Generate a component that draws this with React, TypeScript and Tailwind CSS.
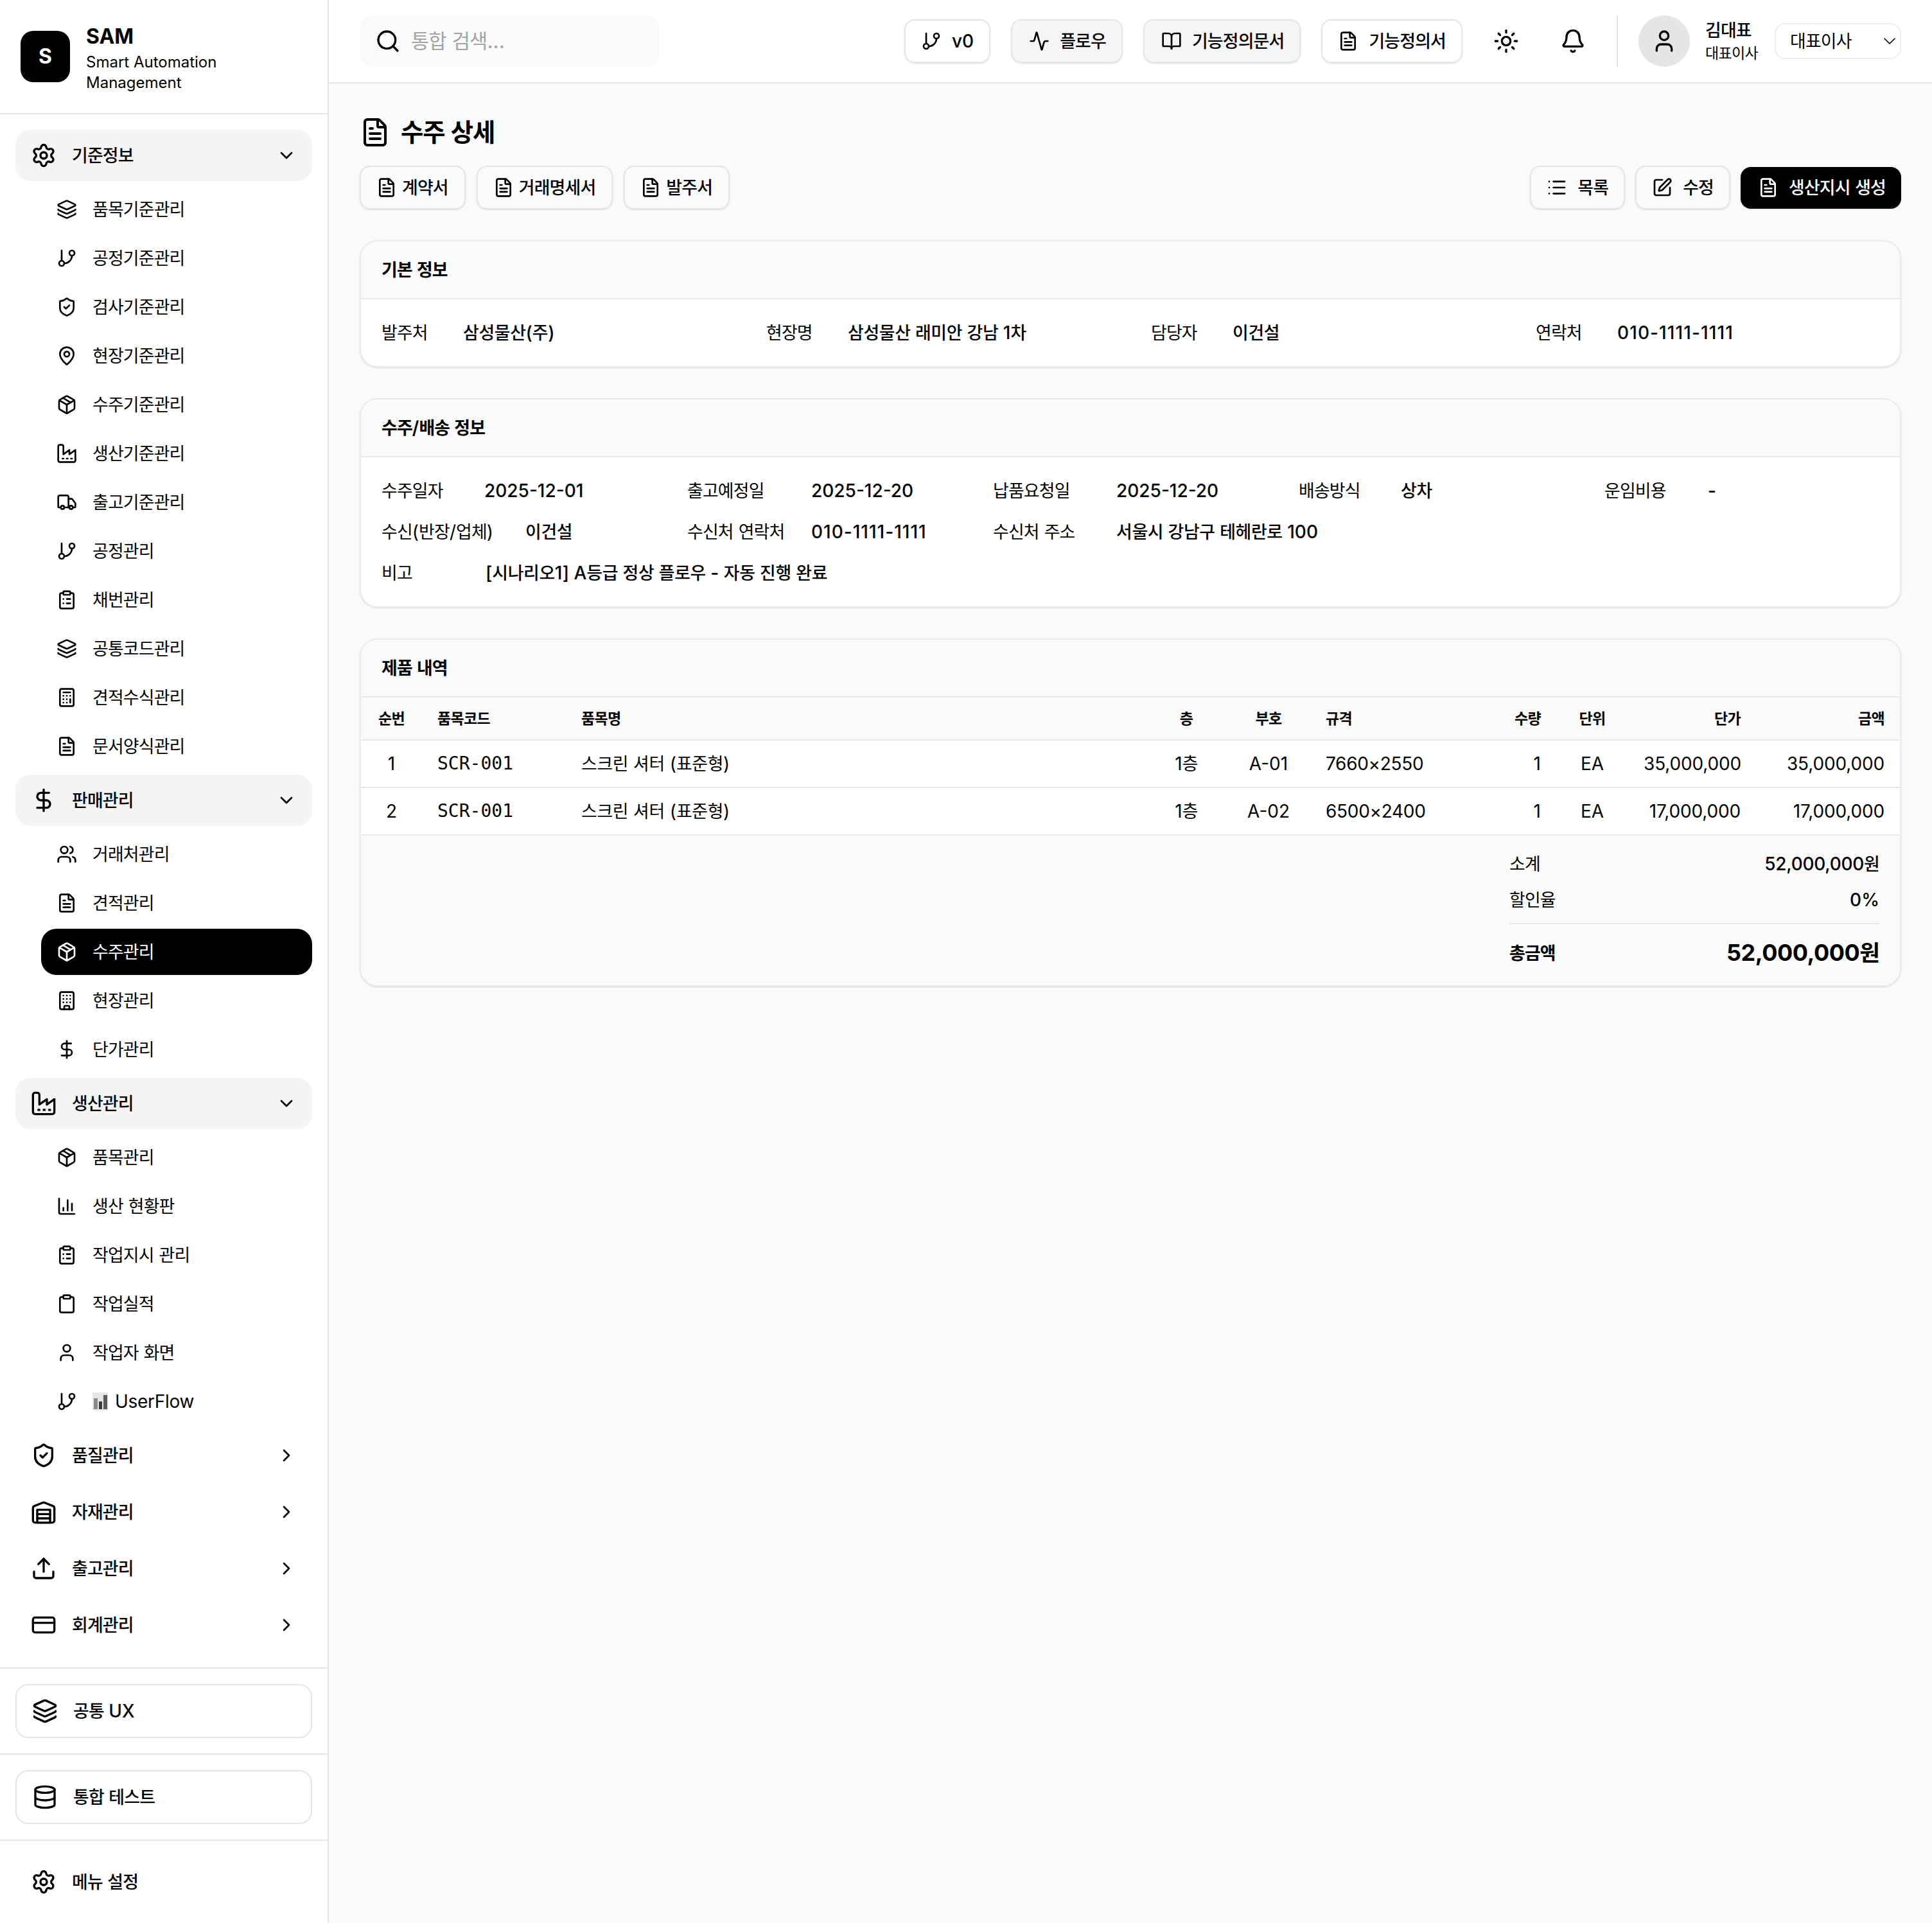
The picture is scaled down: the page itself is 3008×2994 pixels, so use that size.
import type { ComponentType, ReactNode } from "react";
import {
  Activity,
  Bell,
  BookOpen,
  Building,
  Calculator,
  ChartColumn,
  ChevronDown,
  ChevronRight,
  Clipboard,
  ClipboardList,
  CreditCard,
  Database,
  DollarSign,
  FileText,
  GitBranch,
  Layers,
  List,
  MapPin,
  Package,
  Search,
  Settings,
  ShieldCheck,
  SquarePen,
  Sun,
  Truck,
  Upload,
  User,
  Users,
} from "lucide-react";

type Icon = ComponentType<{ size?: number; className?: string }>;

// the reference uses the older zigzag factory, lucide's current one is rounded
const Factory: Icon = ({ size = 24, className }) => (
  <svg width={size} height={size} viewBox="0 0 24 24" fill="none" stroke="currentColor" strokeWidth="2" strokeLinecap="round" strokeLinejoin="round" className={className}>
    <path d="M2 20a2 2 0 0 0 2 2h16a2 2 0 0 0 2-2V8l-7 5V8l-7 5V4a2 2 0 0 0-2-2H4a2 2 0 0 0-2 2Z" />
    <path d="M17 18h1" />
    <path d="M12 18h1" />
    <path d="M7 18h1" />
  </svg>
);

const Warehouse: Icon = ({ size = 24, className }) => (
  <svg width={size} height={size} viewBox="0 0 24 24" fill="none" stroke="currentColor" strokeWidth="2" strokeLinecap="round" strokeLinejoin="round" className={className}>
    <path d="M22 8.35V20a2 2 0 0 1-2 2H4a2 2 0 0 1-2-2V8.35A2 2 0 0 1 3.26 6.5l8-3.2a2 2 0 0 1 1.48 0l8 3.2A2 2 0 0 1 22 8.35Z" />
    <path d="M6 18h12" />
    <path d="M6 14h12" />
    <rect x="6" y="10" width="12" height="12" />
  </svg>
);

// hangul fallback runs wider than the reference font, so squeeze those runs only
function Ko({ children, wide }: { children: string; wide?: boolean }) {
  const parts = children.split(/([\uAC00-\uD7A3]+)/);
  return (
    <span>
      {parts.map((part, i) =>
        i % 2 === 1 ? (
          <span key={i} className={`text-[0.96em] ${wide ? "tracking-[-0.013em]" : "tracking-[-0.03em]"}`}>
            {part}
          </span>
        ) : (
          part
        ),
      )}
    </span>
  );
}

const baseItems: [Icon, string][] = [
  [Layers, "품목기준관리"],
  [GitBranch, "공정기준관리"],
  [ShieldCheck, "검사기준관리"],
  [MapPin, "현장기준관리"],
  [Package, "수주기준관리"],
  [Factory, "생산기준관리"],
  [Truck, "출고기준관리"],
  [GitBranch, "공정관리"],
  [ClipboardList, "채번관리"],
  [Layers, "공통코드관리"],
  [Calculator, "견적수식관리"],
  [FileText, "문서양식관리"],
];

const salesItems: [Icon, string][] = [
  [Users, "거래처관리"],
  [FileText, "견적관리"],
  [Package, "수주관리"],
  [Building, "현장관리"],
  [DollarSign, "단가관리"],
];

const productionItems: [Icon, string][] = [
  [Package, "품목관리"],
  [ChartColumn, "생산 현황판"],
  [ClipboardList, "작업지시 관리"],
  [Clipboard, "작업실적"],
  [User, "작업자 화면"],
];

function GroupHead({ icon: I, label, open }: { icon: Icon; label: string; open?: boolean }) {
  return (
    <div
      className={`flex h-[80px] items-center gap-[24px] rounded-[24px] px-[24px] ${open ? "bg-[#f4f4f5]" : ""}`}
    >
      <I size={40} className="shrink-0" />
      <span className="flex-1 text-[28px] font-medium">
        <Ko>{label}</Ko>
      </span>
      {open ? <ChevronDown size={32} /> : <ChevronRight size={32} />}
    </div>
  );
}

function SubItem({ icon: I, label, active }: { icon: Icon; label: ReactNode; active?: boolean }) {
  return (
    <div
      className={`ml-[40px] flex h-[72px] items-center gap-[24px] rounded-[24px] px-[24px] text-[28px] ${active ? "bg-black text-white" : ""}`}
    >
      <I size={32} className="shrink-0" />
      <span className="flex items-center">{label}</span>
    </div>
  );
}

function SubList({ items, active, children }: { items: [Icon, string][]; active?: string; children?: ReactNode }) {
  return (
    <div className="mt-[8px] flex flex-col gap-[4px]">
      {items.map(([icon, label]) => (
        <SubItem key={label} icon={icon} label={<Ko>{label}</Ko>} active={label === active} />
      ))}
      {children}
    </div>
  );
}

function Sidebar() {
  return (
    <aside className="flex w-[512px] shrink-0 flex-col border-r-2 border-[#e5e5e5] bg-white">
      {/* Logo */}
      <div className="flex h-[178px] shrink-0 items-start gap-[25px] border-b-2 border-[#e5e5e5] px-[32px] pt-[37px]">
        <div className="mt-[11px] flex h-[80px] w-[77px] items-center justify-center rounded-[20px] bg-black text-[32px] font-bold text-white">
          S
        </div>
        <div>
          <div className="mb-[4px] text-[32px] leading-[40px] font-bold">SAM</div>
          <div className="w-[240px] text-[24px] leading-[32px]">Smart Automation Management</div>
        </div>
      </div>

      {/* Menu */}
      <nav className="flex flex-1 flex-col gap-[8px] px-[24px] pt-[24px]">
        <div>
          <GroupHead icon={Settings} label="기준정보" open />
          <SubList items={baseItems} />
        </div>
        <div>
          <GroupHead icon={DollarSign} label="판매관리" open />
          <SubList items={salesItems} active="수주관리" />
        </div>
        <div>
          <GroupHead icon={Factory} label="생산관리" open />
          <SubList items={productionItems}>
            <SubItem
              icon={GitBranch}
              label={
                <>
                  <svg width="24" height="28" viewBox="0 0 24 28" className="mr-[11px]">
                    <rect width="24" height="28" fill="#e6e6e6" />
                    <rect x="2" y="9" width="6" height="17" fill="#8a8a8a" />
                    <rect x="10" y="14" width="5" height="12" fill="#3a3a3a" />
                    <rect x="17" y="4" width="6" height="22" fill="#5c5c5c" />
                  </svg>
                  <span className="tracking-[-0.3px]">UserFlow</span>
                </>
              }
            />
          </SubList>
        </div>
        <GroupHead icon={ShieldCheck} label="품질관리" />
        <GroupHead icon={Warehouse} label="자재관리" />
        <GroupHead icon={Upload} label="출고관리" />
        <GroupHead icon={CreditCard} label="회계관리" />
      </nav>

      {/* Footer */}
      <div className="border-t-2 border-[#e5e5e5] p-[24px]">
        <div className="flex h-[84px] items-center gap-[24px] rounded-[20px] border-2 border-[#e5e5e5] px-[24px] text-[28px] font-medium">
          <Layers size={40} />
          <span>
            <Ko>공통</Ko> UX
          </span>
        </div>
      </div>
      <div className="border-t-2 border-[#e5e5e5] p-[24px]">
        <div className="flex h-[84px] items-center gap-[24px] rounded-[20px] border-2 border-[#e5e5e5] px-[24px] text-[28px] font-medium">
          <Database size={40} />
          <Ko>통합 테스트</Ko>
        </div>
      </div>
      <div className="border-t-2 border-[#e5e5e5] p-[24px]">
        <div className="flex h-[80px] items-center gap-[24px] px-[24px] text-[28px] font-medium">
          <Settings size={40} />
          <Ko>메뉴 설정</Ko>
        </div>
      </div>
    </aside>
  );
}

function OutlineButton({
  icon: I,
  label,
  gap = "gap-[16px]",
  className = "",
}: {
  icon: Icon;
  label: string;
  gap?: string;
  className?: string;
}) {
  return (
    <button
      className={`flex h-[68px] items-center rounded-[16px] border-2 border-[#e5e5e5] text-[28px] font-medium shadow-sm ${gap} ${className}`}
    >
      <I size={32} />
      <Ko>{label}</Ko>
    </button>
  );
}

function Topbar() {
  return (
    <header className="flex h-[130px] shrink-0 items-center justify-between border-b-2 border-[#e5e5e5] bg-white px-[48px]">
      <div className="flex h-[80px] w-[466px] items-center gap-[16px] rounded-[20px] bg-[#fafafa] px-[24px]">
        <Search size={40} />
        <span className="text-[32px] text-[#a3a3a3]">
          <Ko>통합 검색...</Ko>
        </span>
      </div>
      <div className="flex items-center">
        <div className="flex items-center gap-[32px]">
          <OutlineButton icon={GitBranch} label="v0" className="px-[24px]" />
          <OutlineButton icon={Activity} label="플로우" className="bg-[#f5f5f5] pr-[24px] pl-[26px]" />
          <OutlineButton icon={BookOpen} label="기능정의문서" className="bg-[#f5f5f5] pr-[24px] pl-[26px]" />
          <OutlineButton icon={FileText} label="기능정의서" className="px-[24px]" />
        </div>
        <div className="ml-[32px] flex h-[72px] w-[72px] items-center justify-center">
          <Sun size={40} />
        </div>
        <div className="ml-[32px] flex h-[72px] w-[72px] items-center justify-center">
          <Bell size={40} />
        </div>
        <div className="mx-[32px] h-[80px] w-[2px] bg-[#e5e5e5]" />
        <div className="flex h-[80px] w-[80px] items-center justify-center rounded-full bg-[#e5e5e5]">
          <User size={40} />
        </div>
        <div className="ml-[24px] w-[84px]">
          <div className="text-[28px] leading-[36px] font-medium">
            <Ko>김대표</Ko>
          </div>
          <div className="mt-[2px] text-[24px] leading-[32px]">
            <Ko>대표이사</Ko>
          </div>
        </div>
        <div className="ml-[24px] flex h-[56px] w-[197px] items-center justify-between rounded-[16px] border-2 border-[#efefef] pl-[22px] text-[28px]">
          <Ko>대표이사</Ko>
          <ChevronDown size={32} strokeWidth={1.2} />
        </div>
      </div>
    </header>
  );
}

function Card({ title, children }: { title: string; children: ReactNode }) {
  return (
    <section className="mb-[48px] overflow-hidden rounded-[28px] border-2 border-[#ebebeb] bg-white shadow-sm">
      <div className="flex h-[90px] items-center border-b-2 border-[#e8e8e8] bg-[#fafafa] px-[32px] text-[28px] font-semibold">
        <Ko>{title}</Ko>
      </div>
      {children}
    </section>
  );
}

function Field({
  label,
  value,
  labelClass,
  valueClass = "",
}: {
  label: string;
  value: string;
  labelClass: string;
  valueClass?: string;
}) {
  return (
    <div className="flex items-center text-[28px] leading-[40px]">
      <span className={`shrink-0 ${labelClass}`}>
        <Ko>{label}</Ko>
      </span>
      <span className={`font-medium ${valueClass}`}>
        <Ko wide>{value}</Ko>
      </span>
    </div>
  );
}

const th = "border-b-2 border-[#e8e8e8] text-[24px] font-semibold";
const td = "border-b-2 border-[#e8e8e8] text-[28px]";

const rows = [
  ["1", "SCR-001", "스크린 셔터 (표준형)", "1층", "A-01", "7660×2550", "1", "EA", "35,000,000", "35,000,000"],
  ["2", "SCR-001", "스크린 셔터 (표준형)", "1층", "A-02", "6500×2400", "1", "EA", "17,000,000", "17,000,000"],
];

function ProductTable() {
  return (
    <table className="w-full table-fixed border-collapse">
      <thead>
        <tr className="h-[66px] bg-[#fafafa]">
          <th className={`${th} w-[95px] text-center`}><Ko>순번</Ko></th>
          <th className={`${th} w-[224px] px-[24px] text-left`}><Ko>품목코드</Ko></th>
          <th className={`${th} w-[903px] px-[24px] text-left`}><Ko>품목명</Ko></th>
          <th className={`${th} w-[126px] text-center`}><Ko>층</Ko></th>
          <th className={`${th} w-[130px] text-center`}><Ko>부호</Ko></th>
          <th className={`${th} w-[271px] px-[24px] text-left`}><Ko>규격</Ko></th>
          <th className={`${th} w-[112px] px-[24px] text-right`}><Ko>수량</Ko></th>
          <th className={`${th} w-[112px] text-center`}><Ko>단위</Ko></th>
          <th className={`${th} w-[199px] px-[24px] text-right`}><Ko>단가</Ko></th>
          <th className={`${th} w-[224px] px-[24px] text-right`}><Ko>금액</Ko></th>
        </tr>
      </thead>
      <tbody>
        {rows.map((r) => (
          <tr key={r[0]} className="h-[74px] bg-white">
            <td className={`${td} text-center`}>{r[0]}</td>
            <td className={`${td} px-[24px] [font-family:'DejaVu_Sans_Mono',monospace]`}>{r[1]}</td>
            <td className={`${td} px-[24px]`}><Ko wide>{r[2]}</Ko></td>
            <td className={`${td} text-center`}><Ko>{r[3]}</Ko></td>
            <td className={`${td} text-center`}>{r[4]}</td>
            <td className={`${td} px-[24px] tracking-[-0.3px]`}>{r[5]}</td>
            <td className={`${td} px-[24px] text-right`}>{r[6]}</td>
            <td className={`${td} text-center`}>{r[7]}</td>
            <td className={`${td} px-[24px] text-right tracking-[-0.15px]`}>{r[8]}</td>
            <td className={`${td} px-[24px] text-right tracking-[-0.15px]`}>{r[9]}</td>
          </tr>
        ))}
      </tbody>
    </table>
  );
}

function Totals() {
  return (
    <div className="flex justify-end bg-[#fafafa] pt-[24px] pr-[32px] pb-[22px]">
      <div className="w-[576px]">
        <div className="mb-[16px] flex justify-between text-[28px] leading-[40px]">
          <Ko>소계</Ko>
          <span className="font-medium tracking-[-0.3px]"><Ko>52,000,000원</Ko></span>
        </div>
        <div className="mb-[16px] flex justify-between text-[28px] leading-[40px]">
          <Ko>할인율</Ko>
          <span className="font-medium">0%</span>
        </div>
        <div className="flex items-center justify-between border-t-2 border-[#e8e8e8] pt-[16px]">
          <span className="text-[28px] font-semibold"><Ko>총금액</Ko></span>
          <span className="text-[36px] leading-[56px] font-bold tracking-[-0.5px]"><Ko>52,000,000원</Ko></span>
        </div>
      </div>
    </div>
  );
}

export default function App() {
  return (
    <div className="flex min-h-[2994px] w-full bg-[#f9fafb] text-black [font-family:Inter,'Noto_Sans_CJK_KR',sans-serif]">
      <Sidebar />
      <div className="flex min-w-0 flex-1 flex-col">
        <Topbar />
        <main className="p-[48px]">
          <div className="mb-[24px] flex h-[56px] items-center gap-[16px]">
            <FileText size={48} />
            <h1 className="text-[40px] font-bold">
              <Ko>수주 상세</Ko>
            </h1>
          </div>

          <div className="mb-[48px] flex items-center justify-between">
            <div className="flex gap-[17px]">
              <OutlineButton icon={FileText} label="계약서" gap="gap-[8px]" className="pr-[25px] pl-[24px]" />
              <OutlineButton icon={FileText} label="거래명세서" gap="gap-[8px]" className="pr-[25px] pl-[24px]" />
              <OutlineButton icon={FileText} label="발주서" gap="gap-[8px]" className="pr-[25px] pl-[24px]" />
            </div>
            <div className="flex items-center gap-[16px]">
              <OutlineButton icon={List} label="목록" className="px-[24px]" />
              <OutlineButton icon={SquarePen} label="수정" className="px-[24px]" />
              <button className="flex h-[65px] items-center gap-[16px] rounded-[16px] bg-black pr-[24px] pl-[27px] text-[28px] font-medium text-white shadow-sm">
                <FileText size={32} />
                <Ko>생산지시 생성</Ko>
              </button>
            </div>
          </div>

          <Card title="기본 정보">
            <div className="grid grid-cols-4 gap-x-[64px] p-[32px]">
              <Field label="발주처" value="삼성물산(주)" labelClass="w-[127px]" />
              <Field label="현장명" value="삼성물산 래미안 강남 1차" labelClass="w-[127px]" />
              <Field label="담당자" value="이건설" labelClass="w-[127px]" />
              <Field label="연락처" value="010-1111-1111" labelClass="w-[127px]" valueClass="tracking-[1.1px]" />
            </div>
          </Card>

          <Card title="수주/배송 정보">
            <div className="grid grid-cols-5 gap-x-[48px] gap-y-[24px] p-[32px]">
              <Field label="수주일자" value="2025-12-01" labelClass="w-[160px]" />
              <Field label="출고예정일" value="2025-12-20" labelClass="w-[193px]" />
              <Field label="납품요청일" value="2025-12-20" labelClass="w-[192px]" />
              <Field label="배송방식" value="상차" labelClass="w-[159px]" />
              <Field label="운임비용" value="-" labelClass="w-[161px]" />
              <Field label="수신(반장/업체)" value="이건설" labelClass="w-[224px]" />
              <Field label="수신처 연락처" value="010-1111-1111" labelClass="w-[193px]" valueClass="tracking-[1px]" />
              <div className="col-span-3">
                <Field label="수신처 주소" value="서울시 강남구 테헤란로 100" labelClass="w-[192px]" />
              </div>
              <div className="col-span-5">
                <Field label="비고" value="[시나리오1] A등급 정상 플로우 - 자동 진행 완료" labelClass="w-[162px]" />
              </div>
            </div>
          </Card>

          <Card title="제품 내역">
            <ProductTable />
            <Totals />
          </Card>
        </main>
      </div>
    </div>
  );
}
